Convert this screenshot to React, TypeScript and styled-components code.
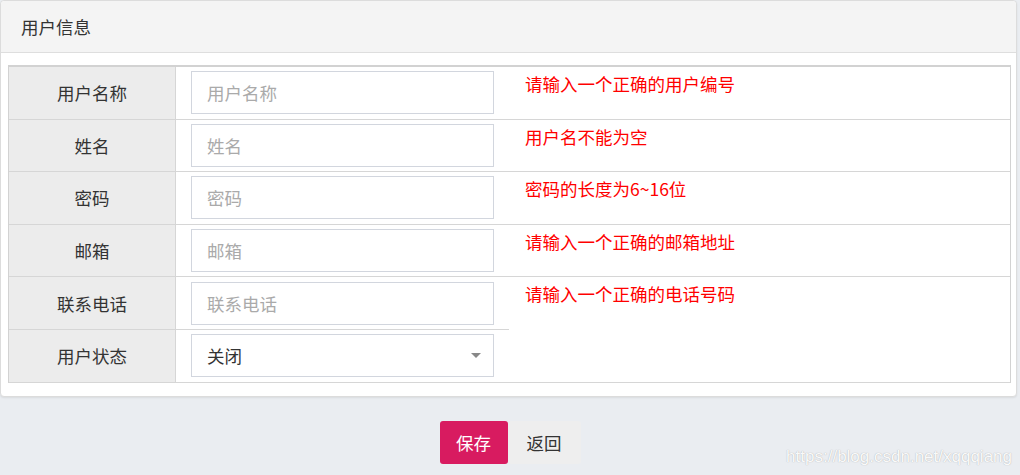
import styled, { createGlobalStyle } from "styled-components";

const GlobalStyle = createGlobalStyle`
  html, body {
    margin: 0;
    padding: 0;
    background: #eaedf1;
    font-family: "Noto Sans CJK SC", "Noto Sans", sans-serif;
    color: #333;
  }
`;

type Field = {
  label: string;
  placeholder?: string;
  error?: string;
  select?: boolean;
};

const fields: Field[] = [
  { label: "用户名称", placeholder: "用户名称", error: "请输入一个正确的用户编号" },
  { label: "姓名", placeholder: "姓名", error: "用户名不能为空" },
  { label: "密码", placeholder: "密码", error: "密码的长度为6~16位" },
  { label: "邮箱", placeholder: "邮箱", error: "请输入一个正确的邮箱地址" },
  { label: "联系电话", placeholder: "联系电话", error: "请输入一个正确的电话号码" },
  { label: "用户状态", select: true },
];

export default function App() {
  return (
    <Page>
      <GlobalStyle />
      <Card>
        <CardHeader>用户信息</CardHeader>
        <CardBody>
          <FormTable>
            {fields.map((f, i) => (
              <FieldRow key={f.label} f={f} span={i === 4} />
            ))}
          </FormTable>
        </CardBody>
      </Card>
      <Actions>
        <SaveButton>保存</SaveButton>
        <BackButton>返回</BackButton>
      </Actions>
      <Watermark>https://blog.csdn.net/xqqqiang</Watermark>
    </Page>
  );
}

function FieldRow({ f, span }: { f: Field; span: boolean }) {
  return (
    <>
      <LabelCell>{f.label}</LabelCell>
      <InputCell>
        {f.select ? (
          <SelectBox>
            <span>关闭</span>
            <Caret />
          </SelectBox>
        ) : (
          <TextInput placeholder={f.placeholder} />
        )}
      </InputCell>
      {f.error !== undefined && <ErrorCell $span={span}>{f.error}</ErrorCell>}
    </>
  );
}

const Page = styled.div`
  position: relative;
  width: 1020px;
  height: 475px;
  overflow: hidden;
`;

const Card = styled.div`
  width: 1017px;
  background: #fff;
  border: 1px solid #dcdcdc;
  border-radius: 4px;
  box-shadow: 0 1px 2px rgba(0, 0, 0, 0.08);
  box-sizing: border-box;
`;

const CardHeader = styled.div`
  height: 51px;
  display: flex;
  align-items: center;
  padding-left: 20px;
  background: #f4f4f4;
  border-bottom: 1px solid #dedede;
  border-radius: 4px 4px 0 0;
  font-size: 17.5px;
  color: #333;
`;

const CardBody = styled.div`
  padding: 12px 5px 13px 7px;
`;

const FormTable = styled.div`
  display: grid;
  grid-template-columns: 167px 333px 1fr;
  grid-auto-rows: 52.6px;
  border: 1px solid #d2d2d2;
  border-top: 2px solid #d2d2d2;
  border-bottom: none;
`;

const LabelCell = styled.div`
  display: flex;
  align-items: center;
  justify-content: center;
  background: #ececec;
  border-right: 1px solid #d6d6d6;
  border-bottom: 1px solid #d6d6d6;
  font-size: 17.5px;
  color: #333;
`;

const InputCell = styled.div`
  display: flex;
  align-items: center;
  padding: 0 15px;
  border-bottom: 1px solid #d6d6d6;
`;

const TextInput = styled.input`
  width: 100%;
  height: 43px;
  box-sizing: border-box;
  border: 1px solid #d2d6de;
  padding: 0 15px;
  font-family: inherit;
  font-size: 17.5px;
  color: #333;
  outline: none;
  &::placeholder {
    color: #aaa;
  }
`;

const SelectBox = styled.div`
  width: 100%;
  height: 43px;
  box-sizing: border-box;
  border: 1px solid #d2d6de;
  padding: 0 12px 0 15px;
  display: flex;
  align-items: center;
  justify-content: space-between;
  font-size: 17.5px;
  color: #333;
`;

const Caret = styled.span`
  width: 0;
  height: 0;
  border-left: 5px solid transparent;
  border-right: 5px solid transparent;
  border-top: 5px solid #888;
`;

const ErrorCell = styled.div<{ $span: boolean }>`
  grid-row: span ${(p) => (p.$span ? 2 : 1)};
  padding: 3px 16px 0;
  border-bottom: 1px solid #d6d6d6;
  color: #ff0000;
  font-size: 17.5px;
  line-height: 27px;
`;

const Actions = styled.div`
  display: flex;
  justify-content: center;
  margin-top: 24px;
`;

const SaveButton = styled.button`
  height: 43px;
  width: 68px;
  border: none;
  border-radius: 3px;
  background: #d81b60;
  color: #fff;
  font-family: inherit;
  font-size: 17.5px;
`;

const BackButton = styled.button`
  height: 43px;
  width: 73px;
  border: none;
  border-radius: 3px;
  background: #eeeeee;
  color: #333;
  font-family: inherit;
  font-size: 17.5px;
`;

const Watermark = styled.div`
  position: absolute;
  right: 8px;
  bottom: 8px;
  font-family: "Liberation Sans", Arial, sans-serif;
  font-size: 17px;
  color: rgba(255, 255, 255, 0.95);
  text-shadow: 0 0 1px rgba(130, 130, 130, 0.7);
`;
